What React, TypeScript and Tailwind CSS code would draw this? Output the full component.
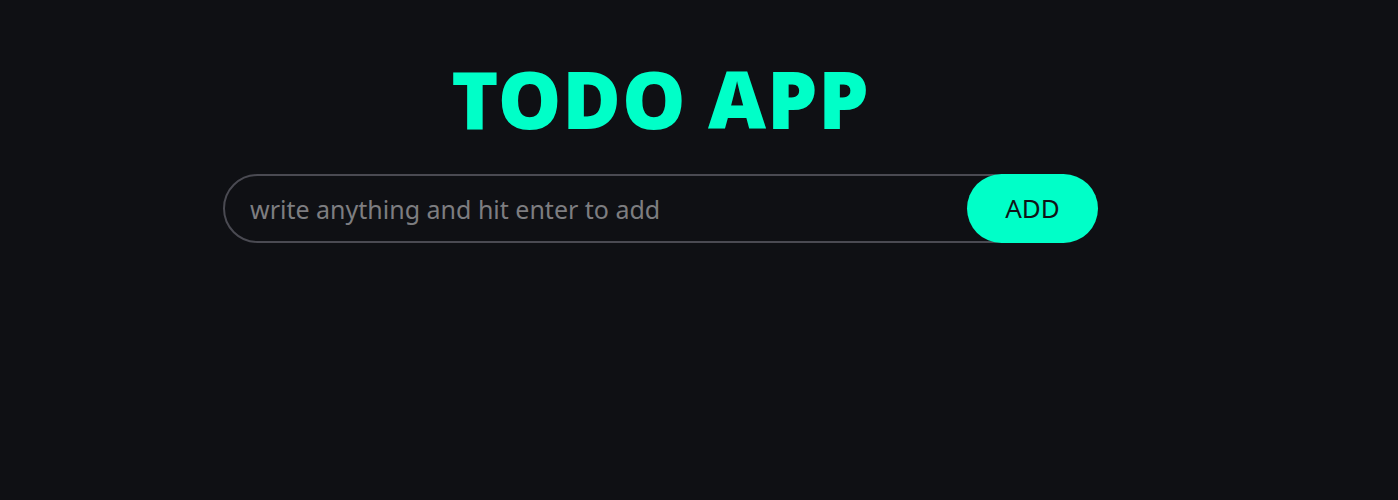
import React, { useState } from 'react';

export default function App() {
  const [text, setText] = useState('');

  return (
    <div className="min-h-[500px] w-full bg-[#0f1014]" style={{ fontFamily: '"Noto Sans", "Open Sans", sans-serif' }}>
      <div className="ml-[223px] w-[875px] pt-[50px]">
        <h1 className="text-center text-[80px] font-black leading-[96px] tracking-[0.01em] text-[#00ffc8]">TODO APP</h1>
        <div className="mt-[28px] flex items-center">
          <input
            value={text}
            onChange={(e) => setText(e.target.value)}
            placeholder="write anything and hit enter to add"
            className="h-[69px] flex-1 rounded-full border-2 border-[#4a4a52] bg-transparent pl-[25px] pr-[80px] text-[25px] text-white outline-none placeholder:text-[#7d7d80]"
          />
          <button className="-ml-[60px] h-[69px] w-[131px] rounded-full bg-[#00ffc8] text-[26px] text-[#111216]">ADD</button>
        </div>
      </div>
    </div>
  );
}
